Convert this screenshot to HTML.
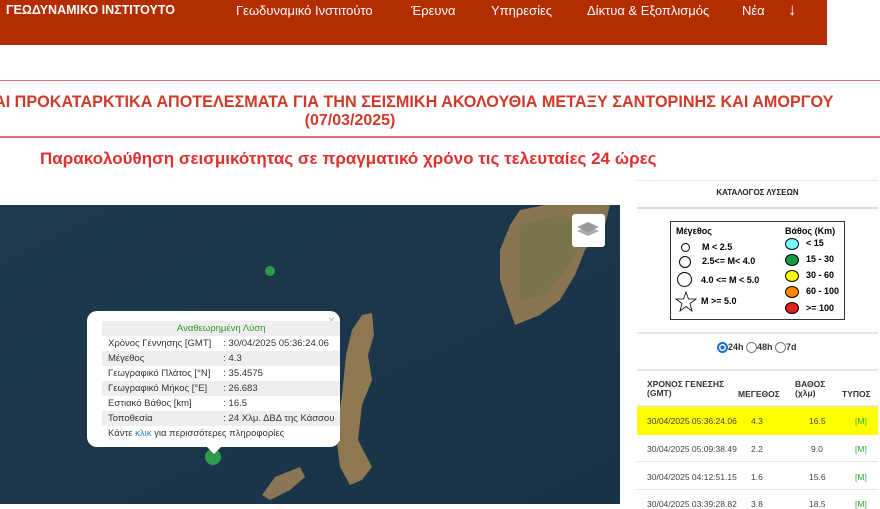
<!DOCTYPE html>
<html><head><meta charset="utf-8"><style>
body{margin:0;width:880px;height:504px;overflow:hidden;background:#fff;font-family:"Liberation Sans","Noto Sans CJK SC",sans-serif;position:relative}
.abs{position:absolute}
.hdr{left:0;top:0;width:827px;height:45px;background:#b32d00}
.hdr span{position:absolute;top:3px;color:#fff;font-size:13px}
.pop td{padding:2px 6px;font-size:9.5px;color:#333;white-space:nowrap}
.pop tr:nth-child(odd) td{background:#eee}
.lg{font-size:9px;font-weight:bold;color:#000}
.tb{font-size:8.5px;color:#444}
</style></head><body>
<div class="abs hdr">
<span style="left:6px;font-weight:bold;font-size:12.5px">ΓΕΩΔΥΝΑΜΙΚΟ ΙΝΣΤΙΤΟΥΤΟ</span>
<span style="left:236px">Γεωδυναμικό Ινστιτούτο</span>
<span style="left:411px">Έρευνα</span>
<span style="left:491px">Υπηρεσίες</span>
<span style="left:587px">Δίκτυα &amp; Εξοπλισμός</span>
<span style="left:742px">Νέα</span>
<span style="left:788px;font-size:17px;top:0">↓</span>
</div>
<div class="abs" style="left:0;top:80px;width:880px;height:1px;background:#e07070"></div>
<div class="abs" style="left:0;top:136px;width:880px;height:2px;background:#e07070"></div>
<div class="abs" style="left:-6px;top:93px;color:#d03a2a;font-weight:bold;font-size:16.2px;white-space:nowrap">ΑΙ ΠΡΟΚΑΤΑΡΚΤΙΚΑ ΑΠΟΤΕΛΕΣΜΑΤΑ ΓΙΑ ΤΗΝ ΣΕΙΣΜΙΚΗ ΑΚΟΛΟΥΘΙΑ ΜΕΤΑΞΥ ΣΑΝΤΟΡΙΝΗΣ ΚΑΙ ΑΜΟΡΓΟΥ</div>
<div class="abs" style="left:0;top:112px;width:700px;text-align:center;color:#d03a2a;font-weight:bold;font-size:16px">(07/03/2025)</div>
<div class="abs" style="left:40px;top:149px;color:#e03030;font-weight:bold;font-size:17px;white-space:nowrap">Παρακολούθηση σεισμικότητας σε πραγματικό χρόνο τις τελευταίες 24 ώρες</div>

<svg class="abs" style="left:0;top:205px" width="620" height="299">
<defs><linearGradient id="s" x1="0" y1="0" x2="1" y2="1"><stop offset="0" stop-color="#1e3a4e"/><stop offset="1" stop-color="#183246"/></linearGradient></defs>
<rect width="620" height="299" fill="url(#s)"/>
<path d="M520 5 L545 0 L610 0 L605 20 L585 45 L575 70 L560 95 L540 110 L515 120 L508 100 L500 75 L500 45 L510 20 Z" fill="#8a7552"/>
<path d="M520 20 L560 10 L590 20 L570 60 L545 90 L520 95 Z" fill="#6a7448" opacity=".5"/>
<path d="M362 110 L372 108 L374 130 L368 150 L372 175 L362 200 L358 235 L372 262 L362 275 L350 280 L340 262 L336 230 L342 190 L346 150 L352 125 Z" fill="#8e7852"/>
<path d="M262 290 L275 272 L300 262 L305 272 L290 285 L270 295 Z" fill="#8a7656"/>
<circle cx="270" cy="66" r="5" fill="#2e9a4e"/>
<circle cx="213" cy="252" r="8" fill="#2e9a4e"/>
<rect x="572" y="9" width="33" height="33" rx="3" fill="#fff"/>
<path d="M577 26 L588 21 L599 26 L588 31 Z" fill="#aaa"/><path d="M577 22 L588 17 L599 22 L588 27 Z" fill="#999"/>
</svg>
<div class="abs" style="left:87px;top:311px;width:253px;height:136px;background:#fff;border-radius:10px"></div>
<div class="abs" style="left:206px;top:446px;width:0;height:0;border-left:8px solid transparent;border-right:8px solid transparent;border-top:8px solid #fff"></div>
<div class="abs" style="left:328px;top:313px;color:#bbb;font-size:12px">×</div>
<table class="abs pop" style="left:102px;top:321px;border-collapse:collapse;width:222px">
<tr><td colspan="2" style="text-align:center;color:#2a9a2a">Αναθεωρημένη Λύση</td></tr>
<tr><td>Χρόνος Γέννησης [GMT]</td><td>: 30/04/2025 05:36:24.06</td></tr>
<tr><td>Μέγεθος</td><td>: 4.3</td></tr>
<tr><td>Γεωγραφικό Πλάτος [°N]</td><td>: 35.4575</td></tr>
<tr><td>Γεωγραφικό Μήκος [°E]</td><td>: 26.683</td></tr>
<tr><td>Εστιακό Βάθος [km]</td><td>: 16.5</td></tr>
<tr><td>Τοποθεσία</td><td>: 24 Χλμ. ΔΒΔ της Κάσσου</td></tr>
<tr><td colspan="2" style="background:#fff">Κάντε <span style="color:#1a8ac0">κλικ</span> για περισσότερες πληροφορίες</td></tr>
</table>

<div class="abs" style="left:637px;top:180px;width:241px;height:1px;background:#e6e6e6"></div>
<div class="abs" style="left:637px;top:188px;width:241px;text-align:center;font-size:8px;font-weight:bold;color:#222">ΚΑΤΑΛΟΓΟΣ ΛΥΣΕΩΝ</div>
<div class="abs" style="left:637px;top:207px;width:241px;height:2px;background:#ddd"></div>
<div class="abs" style="left:670px;top:221px;width:173px;height:97px;border:1px solid #333"></div>
<div class="abs lg" style="left:676px;top:226px">Μέγεθος</div>
<div class="abs lg" style="left:785px;top:226px">Βάθος (Km)</div>
<div class="abs" style="left:681px;top:243px;width:7px;height:7px;border:1px solid #000;border-radius:50%"></div>
<div class="abs" style="left:679px;top:256px;width:10px;height:10px;border:1px solid #000;border-radius:50%"></div>
<div class="abs" style="left:677px;top:272px;width:13px;height:13px;border:1px solid #000;border-radius:50%"></div>
<svg class="abs" style="left:675px;top:291px" width="22" height="22"><path d="M11 1 L13.5 8 L21 8 L15 12.5 L17 20 L11 15.5 L5 20 L7 12.5 L1 8 L8.5 8 Z" fill="none" stroke="#000" stroke-width=".8"/></svg>
<div class="abs lg" style="left:702px;top:242px">M &lt; 2.5</div>
<div class="abs lg" style="left:702px;top:256px">2.5&lt;= M&lt; 4.0</div>
<div class="abs lg" style="left:701px;top:275px">4.0 &lt;= M &lt; 5.0</div>
<div class="abs lg" style="left:701px;top:296px">M &gt;= 5.0</div>
<div class="abs" style="left:785px;top:238px;width:12px;height:10px;border:1px solid #000;border-radius:50%;background:#7ff"></div>
<div class="abs" style="left:785px;top:254px;width:12px;height:10px;border:1px solid #000;border-radius:50%;background:#1a9a40"></div>
<div class="abs" style="left:785px;top:270px;width:12px;height:10px;border:1px solid #000;border-radius:50%;background:#ff0"></div>
<div class="abs" style="left:785px;top:286px;width:12px;height:10px;border:1px solid #000;border-radius:50%;background:#f80"></div>
<div class="abs" style="left:785px;top:302px;width:12px;height:10px;border:1px solid #000;border-radius:50%;background:#e02020"></div>
<div class="abs lg" style="left:806px;top:238px">&lt; 15</div>
<div class="abs lg" style="left:806px;top:254px">15 - 30</div>
<div class="abs lg" style="left:806px;top:270px">30 - 60</div>
<div class="abs lg" style="left:806px;top:286px">60 - 100</div>
<div class="abs lg" style="left:806px;top:303px">&gt;= 100</div>
<div class="abs" style="left:637px;top:332px;width:241px;height:2px;background:#e6e6e6"></div>
<div class="abs" style="left:717px;top:342px;font-size:9px;font-weight:bold;color:#333">
<span style="display:inline-block;width:7px;height:7px;border:2px solid #1a70d0;border-radius:50%;vertical-align:middle;background:radial-gradient(#1a70d0 40%,#fff 45%)"></span>24h <span style="display:inline-block;width:9px;height:9px;border:1px solid #777;border-radius:50%;vertical-align:middle"></span>48h <span style="display:inline-block;width:9px;height:9px;border:1px solid #777;border-radius:50%;vertical-align:middle"></span>7d</div>
<div class="abs" style="left:637px;top:369px;width:241px;height:2px;background:#e6e6e6"></div>
<div class="abs tb" style="left:647px;top:380px;font-weight:bold;color:#333;line-height:9px">ΧΡΟΝΟΣ ΓΕΝΕΣΗΣ<br>(GMT)</div>
<div class="abs tb" style="left:738px;top:389px;font-weight:bold;color:#333">ΜΕΓΕΘΟΣ</div>
<div class="abs tb" style="left:795px;top:380px;font-weight:bold;color:#333;line-height:9px">ΒΑΘΟΣ<br>(χλμ)</div>
<div class="abs tb" style="left:842px;top:389px;font-weight:bold;color:#333">ΤΥΠΟΣ</div>
<div class="abs" style="left:637px;top:405px;width:241px;height:28px;background:#ff0;border-top:2px solid #e6e6e6"></div>
<div class="abs" style="left:637px;top:461px;width:241px;height:1px;background:#e6e6e6"></div>
<div class="abs" style="left:637px;top:489px;width:241px;height:1px;background:#e6e6e6"></div>
<div class="abs tb" style="left:647px;top:416px">30/04/2025 05:36:24.06</div><div class="abs tb" style="left:751px;top:416px">4.3</div><div class="abs tb" style="left:809px;top:416px">16.5</div><div class="abs tb" style="left:855px;top:416px;color:#3a3">[M]</div>
<div class="abs tb" style="left:647px;top:444px">30/04/2025 05:09:38.49</div><div class="abs tb" style="left:751px;top:444px">2.2</div><div class="abs tb" style="left:811px;top:444px">9.0</div><div class="abs tb" style="left:855px;top:444px;color:#3a3">[M]</div>
<div class="abs tb" style="left:647px;top:472px">30/04/2025 04:12:51.15</div><div class="abs tb" style="left:751px;top:472px">1.6</div><div class="abs tb" style="left:809px;top:472px">15.6</div><div class="abs tb" style="left:855px;top:472px;color:#3a3">[M]</div>
<div class="abs tb" style="left:647px;top:499px">30/04/2025 03:39:28.82</div><div class="abs tb" style="left:751px;top:499px">3.8</div><div class="abs tb" style="left:809px;top:499px">18.5</div><div class="abs tb" style="left:855px;top:499px;color:#3a3">[M]</div>
</body></html>
